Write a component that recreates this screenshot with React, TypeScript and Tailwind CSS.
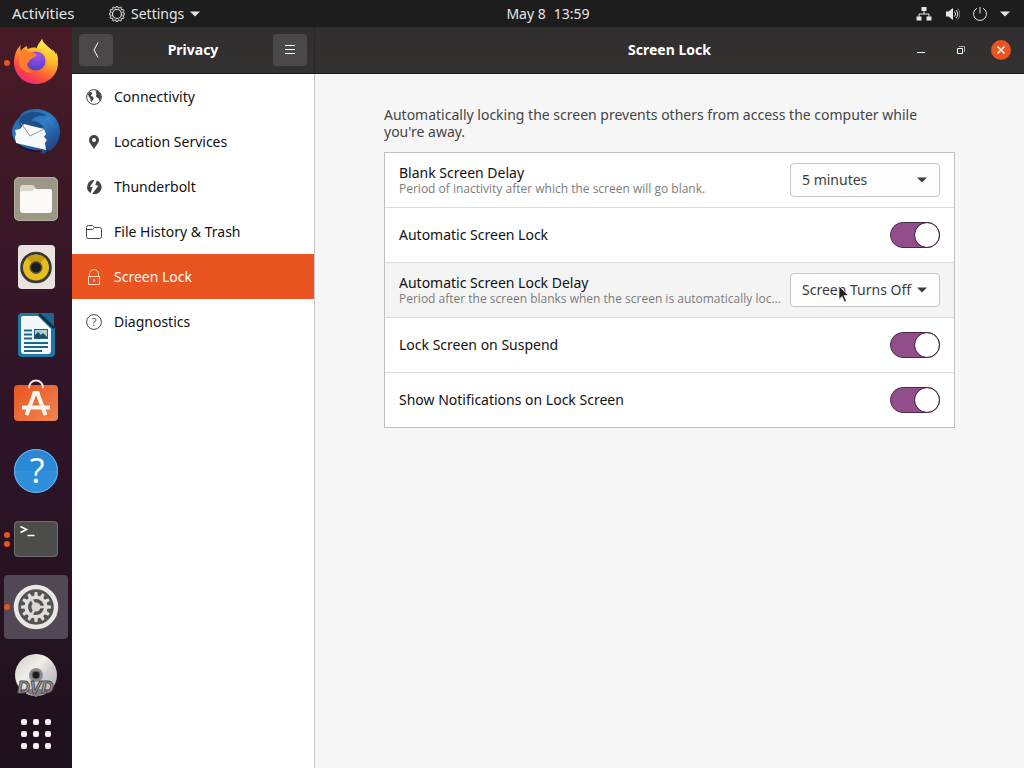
import { useState } from "react";
import type { ReactNode } from "react";

const gearPoints = (cx: number, cy: number, outer: number, inner: number, teeth: number) => {
  const points: string[] = [];
  const step = (Math.PI * 2) / teeth;
  for (let i = 0; i < teeth; i++) {
    const a = i * step - Math.PI / 2;
    [
      [-0.3, inner],
      [-0.18, outer],
      [0.18, outer],
      [0.3, inner],
    ].forEach(([offset, r]) => {
      const t = a + offset * step;
      points.push(`${(cx + r * Math.cos(t)).toFixed(2)},${(cy + r * Math.sin(t)).toFixed(2)}`);
    });
  }
  return points.join(" ");
};

const FirefoxIcon = () => (
  <svg viewBox="0 0 48 48" className="size-12" aria-hidden="true">
    <defs>
      <linearGradient id="ff-body" x1="0.8" y1="0.1" x2="0.3" y2="1">
        <stop offset="0" stopColor="#ffe84a" />
        <stop offset="0.3" stopColor="#ffb42c" />
        <stop offset="0.55" stopColor="#ff7a30" />
        <stop offset="0.8" stopColor="#fb4148" />
        <stop offset="1" stopColor="#ee2a80" />
      </linearGradient>
      <linearGradient id="ff-flame" x1="0.5" y1="0" x2="0.4" y2="1">
        <stop offset="0" stopColor="#fff04f" />
        <stop offset="0.5" stopColor="#ffc730" />
        <stop offset="1" stopColor="#ff8a30" stopOpacity="0" />
      </linearGradient>
      <radialGradient id="ff-globe" cx="0.6" cy="0.2" r="0.9">
        <stop offset="0" stopColor="#a450e8" />
        <stop offset="0.6" stopColor="#6a47d8" />
        <stop offset="1" stopColor="#4a3bb8" />
      </radialGradient>
    </defs>
    <path
      d="M30 0c-1 3-4 4-5 9-4-1-7 0-9 1-1-1-1-2-1-3-3 1-5 3-6 5-1-2-1-4 0-6-4 3-7 10-7 17 0 13 10 22 22 22s22-9 22-21c0-6-3-12-6-14 1 2 1 3 1 5C39 8 31 6 30 0Z"
      fill="url(#ff-body)"
    />
    <path d="M30 0c-2 4-4 5-5 9 6 1 10 6 10 13 0 7-5 11-10 12 10 5 21-3 21-14 0-2-1-5-2-7v3C39 8 31 6 30 0Z" fill="url(#ff-flame)" />
    <circle cx="24" cy="22" r="9.5" fill="url(#ff-globe)" />
    <path d="M9 12c4-2 7-1 8 1 3 0 6 1 8 3-1 2-5 3-7 5-1 2-3 3-3 6 0 3 3 6 6 6-5 2-11-1-13-6-2-5-1-10 1-15Z" fill="#ff7f2a" />
  </svg>
);

const ThunderbirdIcon = () => (
  <svg viewBox="0 0 48 48" className="size-12" aria-hidden="true">
    <defs>
      <linearGradient id="tb-body" x1="0" y1="0" x2="0.8" y2="1">
        <stop offset="0" stopColor="#1f5f9c" />
        <stop offset="0.5" stopColor="#2f80c8" />
        <stop offset="1" stopColor="#1c4080" />
      </linearGradient>
    </defs>
    <path d="M17 3C28-1 48 6 48 25c0 9-5 16-11 19l-2-1-2 4-4-1 1-3C14 44 0 36 0 25 0 19 4 13 8 10c1-4 5-6 9-7Z" fill="url(#tb-body)" />
    <path d="M8 11c8-8 20-7 27-2-7-1-13 0-16 5 5 0 10 2 13 6L14 25c-6-2-8-8-6-14Z" fill="#1b4f86" />
    <path d="M3 34c4 5 14 9 26 10-11 3-22-1-26-10Z" fill="#211437" />
    <path d="M12 17l20 5 2 5-2 3 3 3-2 3 1 7-4-1L4 36l-1-6 1-3-1-4 5-1Z" fill="#f7f8f9" />
    <path d="M9 16l9 13 14-7" fill="none" stroke="#8f9da8" strokeWidth="1" />
    <path d="M35 11c7 5 9 14 5 23 3-6 3-13-1-18-2-3-5-5-8-5Z" fill="#4aa0e4" opacity="0.5" />
  </svg>
);

const FilesIcon = () => (
  <svg viewBox="0 0 48 48" className="size-12" aria-hidden="true">
    <rect x="2" y="2" width="44" height="44" rx="5" fill="#9c9787" />
    <rect x="2.5" y="2.5" width="43" height="43" rx="5" fill="none" stroke="#b3ae9f" />
    <path d="M8 17v-4q0-3 3-3h9q2 0 3 2l2 3v4H8Z" fill="#d9d6cc" />
    <path d="M8 18q0-2 2-2h10l3-2h15q2 0 2 2v19q0 3-3 3H11q-3 0-3-3Z" fill="#faf9f6" />
  </svg>
);

const RhythmboxIcon = () => (
  <svg viewBox="0 0 48 48" className="size-12" aria-hidden="true">
    <rect x="6" y="2" width="37" height="44" rx="4" fill="#e9e3e0" />
    <circle cx="24" cy="24.5" r="15.8" fill="#3b3836" />
    <circle cx="24" cy="24.5" r="13" fill="#e8bd1d" />
    <path d="M24 24.5 15 15a13 13 0 0 1 18 0Z" fill="#c59c12" />
    <circle cx="24" cy="24.5" r="6.5" fill="#555" />
    <circle cx="24" cy="24.5" r="5" fill="#1d1c1b" />
  </svg>
);

const WriterIcon = () => (
  <svg viewBox="0 0 48 48" className="size-12" aria-hidden="true">
    <path d="M10 2h18l15 15v25q0 4-4 4H10q-4 0-4-4V6q0-4 4-4Z" fill="#1f78a4" />
    <path d="M11 5h15l13 13v22q0 3-3 3H12q-3 0-3-3V7q0-2 2-2Z" fill="#f4f8fa" />
    <path d="M28 2h12q2 0 2 2v12Z" fill="#1a668f" />
    <path d="M27 3l15 14" stroke="#0f2c40" strokeWidth="2.5" />
    <path d="M12 19.5h8M12 23.5h8M12 27.5h8M12 32h24M12 36h24M12 40h18" stroke="#1b6587" strokeWidth="1.8" />
    <rect x="22" y="18" width="14" height="10" fill="#1b6587" />
    <rect x="23" y="19" width="12" height="8" fill="#9bd0e8" />
    <path d="M23 27v-3l3-3 3 3 2-2 4 4v1Z" fill="#234a57" />
    <circle cx="32.5" cy="20.5" r="1.2" fill="#f6d54a" />
  </svg>
);

const SoftwareIcon = () => (
  <svg viewBox="0 0 48 48" className="size-12" aria-hidden="true">
    <defs>
      <linearGradient id="sw-bag" x1="0" y1="0" x2="1" y2="1">
        <stop offset="0" stopColor="#e9541f" />
        <stop offset="1" stopColor="#f08650" />
      </linearGradient>
    </defs>
    <rect x="2" y="6" width="44" height="36" rx="4" fill="url(#sw-bag)" />
    <path d="M17 8.5a7 7 0 0 1 14 0" fill="none" stroke="#f7e3d9" strokeWidth="2" strokeLinecap="round" />
    <g fill="none" stroke="#fdf6f0" strokeWidth="4">
      <path d="M23 13 14.5 36M25 13 33.5 36" />
      <path d="M10 28.5h28" strokeWidth="4" />
    </g>
    <path d="M21 12h6l1 4h-8Z" fill="#fdf6f0" />
  </svg>
);

const HelpIcon = () => (
  <svg viewBox="0 0 48 48" className="size-12" aria-hidden="true">
    <circle cx="24" cy="24" r="22" fill="#2f8fdb" />
    <path d="M2 24a22 22 0 0 1 44 0Z" fill="#2b88d4" />
    <circle cx="24" cy="24" r="21.5" fill="none" stroke="#6ab4ec" />
    <text x="25" y="36" textAnchor="middle" fontFamily="Open Sans, sans-serif" fontSize="34" fill="#fff">
      ?
    </text>
  </svg>
);

const TerminalIcon = () => (
  <svg viewBox="0 0 48 48" className="size-12" aria-hidden="true">
    <rect x="2" y="6" width="44" height="36" rx="4" fill="#4c4d4b" />
    <rect x="2.5" y="6.5" width="43" height="35" rx="4" fill="none" stroke="#6d6e6c" />
    <path d="M8.5 11.5l6 3-6 3M15.5 20.5h7" fill="none" stroke="#fff" strokeWidth="1.6" />
  </svg>
);

const SettingsIcon = () => (
  <svg viewBox="0 0 48 48" className="size-12" aria-hidden="true">
    <circle cx="24" cy="24" r="20" fill="#555452" stroke="#e9e8e6" strokeWidth="4.5" />
    <polygon points={gearPoints(24, 24, 15, 11.5, 12)} fill="#e0dfdd" />
    <circle cx="24" cy="24" r="8" fill="#555452" />
    <circle cx="24" cy="24" r="4.5" fill="#d9d8d6" />
    <path d="M24 24h10M24 24l-5-8.7M24 24l-5 8.7" stroke="#d9d8d6" strokeWidth="2.5" />
  </svg>
);

const DvdIcon = () => (
  <svg viewBox="0 0 48 48" className="size-12" aria-hidden="true">
    <defs>
      <linearGradient id="dvd-disc" x1="0" y1="0" x2="1" y2="1">
        <stop offset="0" stopColor="#c9c9c9" />
        <stop offset="0.4" stopColor="#f1f0e6" />
        <stop offset="0.6" stopColor="#d2d0d4" />
        <stop offset="1" stopColor="#aaa" />
      </linearGradient>
    </defs>
    <circle cx="24" cy="24" r="21" fill="url(#dvd-disc)" />
    <circle cx="24" cy="24" r="7" fill="#8d8b8c" />
    <circle cx="24" cy="24" r="4" fill="#1c1a1b" stroke="#666" />
    <path d="M8 38h32l-9 5-7 3-7-3Z" fill="#807e82" />
    <text
      x="23.5"
      y="42"
      textAnchor="middle"
      fontFamily="Liberation Sans, sans-serif"
      fontSize="17"
      fontWeight="700"
      fontStyle="italic"
      fill="#a9a7aa"
      stroke="#4b494c"
      strokeWidth="1"
    >
      DVD
    </text>
  </svg>
);

const ConnectivityIcon = () => (
  <svg viewBox="0 0 16 16" className="size-4" aria-hidden="true">
    <circle cx="8" cy="8" r="7.4" fill="none" stroke="currentColor" strokeWidth="1" />
    <path
      d="M2 5 3.500 3l2 .3L6.500 5 5 5.700 5 7l1.500.5L7.700 8.700l-.5 2L6 12l-.5 1.500L4.700 12l-.3-2.500L2.700 7.500ZM9 1.500l3 .5 2.500 3 .5 3-.5 3-1.200.8-1-2.800-2-1-.3-1.700L10.800 5 9.500 4l1-1Z"
      fill="currentColor"
    />
  </svg>
);

const LocationIcon = () => (
  <svg viewBox="0 0 16 16" className="size-4" aria-hidden="true">
    <path d="M8 1a5 5 0 0 0-5 5c0 3 3 5.500 5 9 2-3.500 5-6 5-9a5 5 0 0 0-5-5Zm0 3a2 2 0 1 1 0 4 2 2 0 0 1 0-4Z" fill="currentColor" fillRule="evenodd" />
  </svg>
);

const ThunderboltIcon = () => (
  <svg viewBox="0 0 16 16" className="size-4" aria-hidden="true">
    <path d="M8.5 1 3.8 7.8l2.800.5-2 5.700A7 7 0 0 1 8.500 1Z" fill="currentColor" />
    <path d="M10.8 1.500 9.300 6l3 .8-6 8A7 7 0 0 0 10.800 1.500Z" fill="currentColor" />
  </svg>
);

const FolderIcon = () => (
  <svg viewBox="0 0 16 16" className="size-4" fill="none" stroke="currentColor" aria-hidden="true">
    <path d="M.5 3.500q0-2 2-2h4l2 2h5q2 0 2 2v7q0 2-2 2h-11q-2 0-2-2Z" />
    <path d="M.5 5.500h6l2-2" />
  </svg>
);

const LockIcon = () => (
  <svg viewBox="0 0 16 16" className="size-4" fill="none" stroke="currentColor" aria-hidden="true">
    <path d="M2.500 7.500h11v8h-11ZM3.500 7.500V5a4.500 4.500 0 0 1 9 0v2.500" />
    <path d="M8 10v3" strokeWidth="1.5" />
  </svg>
);

const DiagnosticsIcon = () => (
  <svg viewBox="0 0 16 16" className="size-4" aria-hidden="true">
    <circle cx="8" cy="8" r="7.4" fill="none" stroke="currentColor" strokeWidth="1" />
    <text x="8" y="12" textAnchor="middle" fontFamily="Open Sans, sans-serif" fontSize="11" fill="currentColor">
      ?
    </text>
  </svg>
);

const TriangleDown = () => (
  <svg viewBox="0 0 10 6" className="h-1.5 w-2.5 shrink-0" aria-hidden="true">
    <path d="M0 .5h10L5 5.500Z" fill="currentColor" />
  </svg>
);

const DOCK: { name: string; icon: ReactNode; windows: number; active?: boolean }[] = [
  { name: "Firefox", icon: <FirefoxIcon />, windows: 1 },
  { name: "Thunderbird", icon: <ThunderbirdIcon />, windows: 0 },
  { name: "Files", icon: <FilesIcon />, windows: 0 },
  { name: "Rhythmbox", icon: <RhythmboxIcon />, windows: 0 },
  { name: "LibreOffice Writer", icon: <WriterIcon />, windows: 0 },
  { name: "Ubuntu Software", icon: <SoftwareIcon />, windows: 0 },
  { name: "Help", icon: <HelpIcon />, windows: 0 },
  { name: "Terminal", icon: <TerminalIcon />, windows: 2 },
  { name: "Settings", icon: <SettingsIcon />, windows: 1, active: true },
  { name: "DVD", icon: <DvdIcon />, windows: 0 },
];

const SECTIONS = [
  { name: "Connectivity", icon: <ConnectivityIcon /> },
  { name: "Location Services", icon: <LocationIcon /> },
  { name: "Thunderbolt", icon: <ThunderboltIcon /> },
  { name: "File History & Trash", icon: <FolderIcon /> },
  { name: "Screen Lock", icon: <LockIcon /> },
  { name: "Diagnostics", icon: <DiagnosticsIcon /> },
];

const TopBar = () => (
  <header className="grid h-[27px] grid-cols-[72px_1fr_auto_1fr] items-center bg-[#1d1d1d] text-[#e6e6e6]">
    <button type="button" className="pl-3 text-left text-[15px] whitespace-nowrap">
      Activities
    </button>
    <button type="button" className="flex items-center gap-1.5 pl-[37px]">
      <svg viewBox="0 0 16 16" className="size-4" fill="none" stroke="currentColor" aria-hidden="true">
        <polygon points={gearPoints(8, 8, 7.8, 6.3, 12)} strokeWidth="1" strokeLinejoin="round" />
        <circle cx="8" cy="8" r="4.5" strokeWidth="1.2" />
      </svg>
      Settings
      <TriangleDown />
    </button>
    <button type="button" className="flex gap-2">
      <span>May 8</span>
      <span>13:59</span>
    </button>
    <button type="button" aria-label="System menu" className="flex items-center gap-3 justify-self-end pr-[14px]">
      <svg viewBox="0 0 16 16" className="size-4" aria-hidden="true">
        <path d="M5.500 1h5v4h-5ZM.5 10.500h5v4h-5ZM10.500 10.500h5v4h-5Z" fill="currentColor" />
        <path d="M8 5v3M3 11V8h10v3" fill="none" stroke="currentColor" />
      </svg>
      <svg viewBox="0 0 16 16" className="size-4" fill="none" stroke="currentColor" aria-hidden="true">
        <path d="M2 5.500h2.500L9 2v12l-4.500-3.500H2Z" fill="currentColor" stroke="none" />
        <path d="M10.500 5.500a3.500 3.500 0 0 1 0 5M12 4a5.500 5.500 0 0 1 0 8" />
        <path d="M13.500 2.500a7.500 7.500 0 0 1 0 11" opacity="0.5" />
      </svg>
      <svg viewBox="0 0 16 16" className="size-4" fill="none" stroke="currentColor" aria-hidden="true">
        <path d="M5 2.200a6.500 6.500 0 1 0 6 0M8 1v6.500" />
      </svg>
      <TriangleDown />
    </button>
  </header>
);

const Dock = () => (
  <nav aria-label="Dock" className="flex w-[72px] shrink-0 flex-col items-center bg-linear-to-b from-[#481b26] via-[#2e1427] to-[#1f111d] pt-1">
    <ul className="flex flex-col gap-1">
      {DOCK.map((app) => (
        <li key={app.name}>
          <button
            type="button"
            aria-label={app.name}
            className={`relative flex size-16 items-center justify-center rounded-sm ${app.active ? "bg-[#524754]" : ""}`}
          >
            {app.icon}
            <span className="absolute inset-y-0 left-0 flex flex-col justify-center gap-[3px]">
              {Array.from({ length: app.windows }, (_, i) => (
                <span key={i} className="size-1.5 rounded-full bg-[#e95420]" />
              ))}
            </span>
          </button>
        </li>
      ))}
    </ul>
    <button type="button" aria-label="Show Applications" className="grid h-[54px] w-16 grid-cols-[repeat(3,6px)] content-center justify-center gap-1.5">
      {Array.from({ length: 9 }, (_, i) => (
        <span key={i} className="size-1.5 rounded-[2px] bg-[#f5eff3]" />
      ))}
    </button>
  </nav>
);

const HeaderBar = () => (
  <div className="flex h-[47px] border-b border-[#1a1919] bg-linear-to-b from-[#302e2e] to-[#343131] leading-4 text-white">
    <div className="flex w-[243px] shrink-0 items-center justify-between border-r border-[#292727] px-[7px]">
      <button type="button" aria-label="Back" className="flex h-8 w-[34px] items-center justify-center rounded-[4px] bg-[#4a4848]">
        <svg viewBox="0 0 16 16" className="size-4" fill="none" stroke="currentColor" aria-hidden="true">
          <path d="M10 .5 6 8l4 7.500" />
        </svg>
      </button>
      <h2 className="font-bold">Privacy</h2>
      <button type="button" aria-label="Menu" className="flex h-8 w-[34px] items-center justify-center rounded-[4px] bg-[#4a4848]">
        <svg viewBox="0 0 16 16" className="size-4" fill="none" stroke="currentColor" aria-hidden="true">
          <path d="M3 3.500h10M3 7.500h10M3 11.500h10" />
        </svg>
      </button>
    </div>
    <div className="grid flex-1 grid-cols-[1fr_auto_1fr] items-center">
      <h1 className="col-start-2 font-bold">Screen Lock</h1>
      <div className="flex justify-end pr-[3px]">
        <button type="button" aria-label="Minimize" className="flex size-10 items-center justify-center">
          <svg viewBox="0 0 16 16" className="size-4" stroke="currentColor" aria-hidden="true">
            <path d="M4 10.500h8" />
          </svg>
        </button>
        <button type="button" aria-label="Restore" className="flex size-10 items-center justify-center">
          <svg viewBox="0 0 16 16" className="size-4" fill="none" stroke="currentColor" aria-hidden="true">
            <path d="M4.500 6.500h5v5h-5Z" />
            <path d="M6 4.500h5.500V10" opacity="0.6" />
          </svg>
        </button>
        <button type="button" aria-label="Close" className="flex size-10 items-center justify-center">
          <span className="flex size-5 items-center justify-center rounded-full bg-[#e95420]">
            <svg viewBox="0 0 16 16" className="size-4" stroke="currentColor" aria-hidden="true">
              <path d="M4.500 4.500l7 7M11.500 4.500l-7 7" strokeWidth="1.5" />
            </svg>
          </span>
        </button>
      </div>
    </div>
  </div>
);

const Row = ({ id, title, hint, hover, children }: { id: string; title: string; hint?: string; hover?: boolean; children: ReactNode }) => (
  <li className={`flex h-[55px] items-center gap-4 border-b border-[#dcdcdc] px-[14px] last:h-[54px] last:border-b-0 ${hover ? "bg-[#f4f4f4]" : "bg-white"}`}>
    <div className={`min-w-0 flex-1 leading-4 ${hint ? "pt-0.5" : ""}`}>
      <label htmlFor={id} className="block text-[#111]">
        {title}
      </label>
      {hint && <p className="font-['Open_Sans',sans-serif] text-[12px] whitespace-nowrap text-[#7b7b7b]">{hint}</p>}
    </div>
    {children}
  </li>
);

const Dropdown = ({ id, options }: { id: string; options: string[] }) => (
  <div className="relative w-[150px] shrink-0">
    <select id={id} className="h-[34px] w-full appearance-none rounded-[4px] border border-[#c6c6c6] bg-[#fdfdfd] pb-0.5 pl-[11px] text-[#3d3d3d]">
      {options.map((o) => (
        <option key={o}>{o}</option>
      ))}
    </select>
    <span className="pointer-events-none absolute inset-y-0 right-[13px] flex items-center text-[#3d3d3d]">
      <TriangleDown />
    </span>
  </div>
);

const Switch = ({ id }: { id: string }) => {
  const [on, setOn] = useState(true);
  return (
    <input
      id={id}
      type="checkbox"
      role="switch"
      checked={on}
      onChange={(e) => setOn(e.target.checked)}
      className="flex h-[26px] w-[50px] shrink-0 appearance-none items-center rounded-full border border-[#4a2a47] bg-[#c9c9c9] before:size-6 before:rounded-full before:bg-white before:outline before:outline-[#4a2a47] checked:justify-end checked:bg-[#924d8b]"
    />
  );
};

const Pointer = () => (
  <svg viewBox="0 0 12 18" className="pointer-events-none absolute top-3 right-[90px] h-[18px] w-3" aria-hidden="true">
    <path d="M1 1v13.500l3-3L6.500 17l2-1L6 10.500h4.500Z" fill="#222" stroke="#fff" strokeWidth="0.7" />
  </svg>
);

export default function App() {
  const [section, setSection] = useState("Screen Lock");

  return (
    <div className="flex min-h-screen flex-col bg-[#f6f6f6] font-['Noto_Sans',sans-serif] text-[14px] leading-[17px]">
      <TopBar />
      <div className="flex flex-1">
        <Dock />
        <div className="flex min-w-0 flex-1 flex-col">
          <HeaderBar />
          <div className="flex flex-1">
            <nav aria-label="Privacy" className="w-[243px] shrink-0 border-r border-[#c4c4c4] bg-white">
              {SECTIONS.map((s) => (
                <button
                  key={s.name}
                  type="button"
                  onClick={() => setSection(s.name)}
                  className={`flex h-[45px] w-full items-center gap-3 px-[14px] ${section === s.name ? "bg-[#e95420] text-white" : "text-[#111]"}`}
                >
                  <span className={section === s.name ? "text-[#ffd9c4]" : "text-[#444]"}>{s.icon}</span>
                  {s.name}
                </button>
              ))}
            </nav>
            <main className="min-w-0 flex-1 pt-8">
              <div className="mx-auto max-w-[571px]">
                <p className="mb-3 text-[#454545]">Automatically locking the screen prevents others from access the computer while you're away.</p>
                <ul className="border border-[#bfbfbf]">
                  <Row id="blank-delay" title="Blank Screen Delay" hint="Period of inactivity after which the screen will go blank.">
                    <Dropdown id="blank-delay" options={["5 minutes"]} />
                  </Row>
                  <Row id="auto-lock" title="Automatic Screen Lock">
                    <Switch id="auto-lock" />
                  </Row>
                  <Row
                    id="lock-delay"
                    title="Automatic Screen Lock Delay"
                    hint="Period after the screen blanks when the screen is automatically loc…"
                    hover
                  >
                    <div className="relative">
                      <Dropdown id="lock-delay" options={["Screen Turns Off"]} />
                      <Pointer />
                    </div>
                  </Row>
                  <Row id="lock-suspend" title="Lock Screen on Suspend">
                    <Switch id="lock-suspend" />
                  </Row>
                  <Row id="lock-notifications" title="Show Notifications on Lock Screen">
                    <Switch id="lock-notifications" />
                  </Row>
                </ul>
              </div>
            </main>
          </div>
        </div>
      </div>
    </div>
  );
}
